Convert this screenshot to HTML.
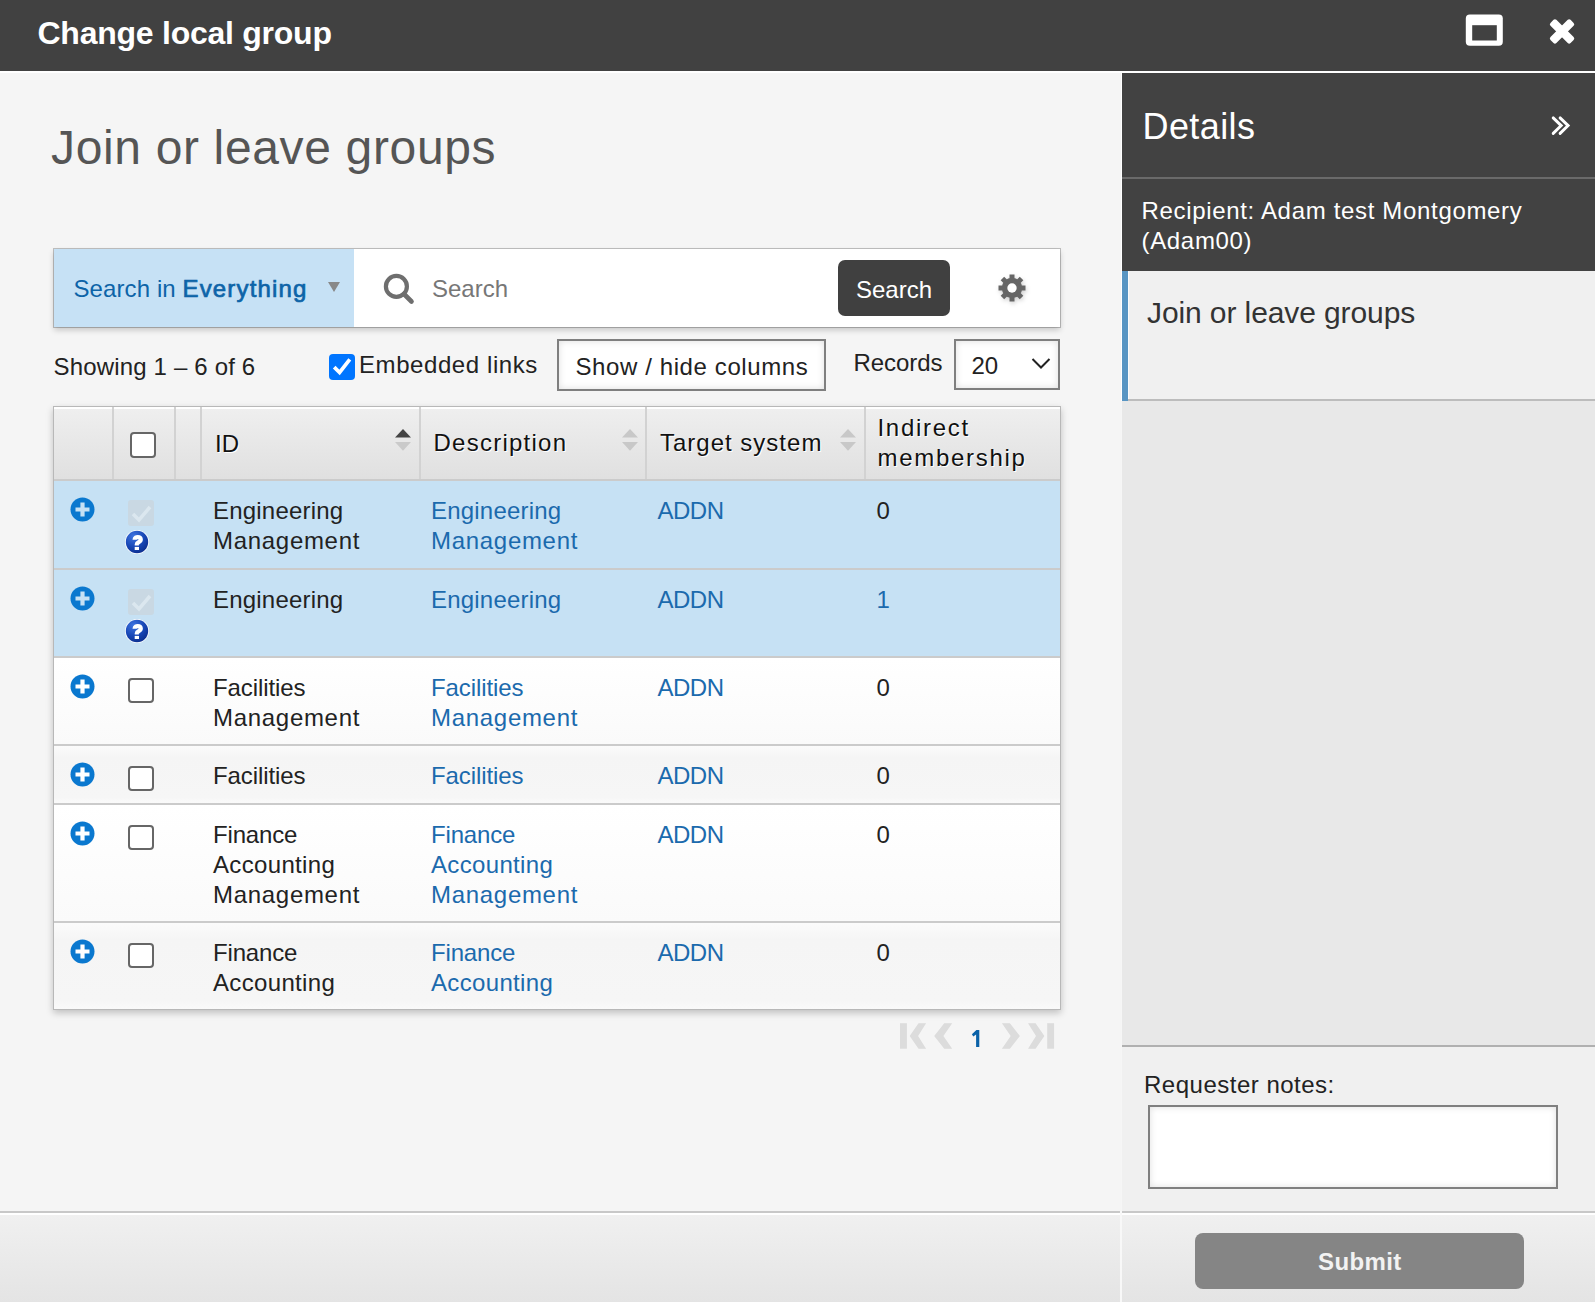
<!DOCTYPE html>
<html><head><meta charset="utf-8"><title>Change local group</title>
<style>
html,body{margin:0;padding:0;}
body{width:1595px;height:1302px;overflow:hidden;position:relative;background:#f5f5f5;font-family:"Liberation Sans",sans-serif;}
.r{position:absolute;}
.t{position:absolute;white-space:nowrap;}
svg{display:block;}
</style></head><body>
<div class="r" style="left:0px;top:0px;width:1595px;height:71px;background:#414141;"></div>
<div class="t " style="left:37.5px;top:13.11px;font-size:32px;line-height:40px;color:#fff;font-weight:700;letter-spacing:-0.25px;">Change local group</div>
<svg class="r" style="left:1465px;top:14px" width="39" height="34" viewBox="0 0 39 34"><rect x="0.8" y="0.5" width="37" height="31.3" rx="4" fill="#fff"/><rect x="7.2" y="11.2" width="24.6" height="15.3" fill="#414141"/></svg>
<svg class="r" style="left:1542px;top:11px" width="40" height="40" viewBox="0 0 40 40"><g transform="translate(20.05,20.4) rotate(45)" fill="#fff"><rect x="-14.2" y="-4.15" width="28.4" height="8.3" rx="2"/><rect x="-4.15" y="-14.2" width="8.3" height="28.4" rx="2"/></g></svg>
<div class="r" style="left:0px;top:71px;width:1595px;height:2px;background:#fff;"></div>
<div class="r" style="left:0px;top:73px;width:1121px;height:1138px;background:#f5f5f5;"></div>
<div class="r" style="left:1121px;top:71px;width:1px;height:330px;background:#fff;"></div>
<div class="r" style="left:1121px;top:401px;width:1px;height:810px;background:#f6f6f6;"></div>
<div class="r" style="left:1120px;top:1211px;width:2px;height:91px;background:#f8f8f8;"></div>
<div class="t " style="left:51px;top:118.17px;font-size:48px;line-height:60px;color:#555;letter-spacing:0.65px;">Join or leave groups</div>
<div class="r" style="left:54px;top:249px;width:1006px;height:78px;background:#fff;box-shadow:0 0 0 1px rgba(0,0,0,.22),0 3px 6px rgba(0,0,0,.2);"></div>
<div class="r" style="left:54px;top:249px;width:300px;height:78px;background:#c6e1f5;"></div>
<div class="t " style="left:73.5px;top:273.88px;font-size:24px;line-height:30px;color:#0d64a8;letter-spacing:0.1px;">Search in <span style="-webkit-text-stroke:0.7px #0d64a8;letter-spacing:1.15px">Everything</span></div>
<svg class="r" style="left:327px;top:281px" width="14" height="12" viewBox="0 0 14 12"><path d="M1 1 H13 L7 11 Z" fill="#888"/></svg>
<svg class="r" style="left:380px;top:270px" width="36" height="36" viewBox="0 0 36 36"><circle cx="16.4" cy="16.4" r="10.5" fill="none" stroke="#6e6e6e" stroke-width="4.2"/><path d="M24 24 L31.5 31.5" stroke="#6e6e6e" stroke-width="4.6" stroke-linecap="round"/></svg>
<div class="t " style="left:432px;top:273.68px;font-size:24px;line-height:30px;color:#777;">Search</div>
<div class="r" style="left:838px;top:260px;width:112px;height:56px;background:#404040;border-radius:7px;"></div>
<div class="t " style="left:856px;top:274.68px;font-size:24px;line-height:30px;color:#fff;">Search</div>
<svg class="r" style="left:995.6px;top:271.5px;filter:drop-shadow(1px 2px 2px rgba(0,0,0,.18))" width="32" height="32" viewBox="0 0 32 32"><g transform="translate(16,16)" fill="#666"><circle r="10.2"/><rect x="-2.5" y="-13.5" width="5" height="6" transform="rotate(0)"/><rect x="-2.5" y="-13.5" width="5" height="6" transform="rotate(45)"/><rect x="-2.5" y="-13.5" width="5" height="6" transform="rotate(90)"/><rect x="-2.5" y="-13.5" width="5" height="6" transform="rotate(135)"/><rect x="-2.5" y="-13.5" width="5" height="6" transform="rotate(180)"/><rect x="-2.5" y="-13.5" width="5" height="6" transform="rotate(225)"/><rect x="-2.5" y="-13.5" width="5" height="6" transform="rotate(270)"/><rect x="-2.5" y="-13.5" width="5" height="6" transform="rotate(315)"/><circle r="4.7" fill="#fff"/></g></svg>
<div class="t " style="left:53.5px;top:351.58px;font-size:24px;line-height:30px;color:#222;letter-spacing:0.17px;">Showing 1 – 6 of 6</div>
<div class="r" style="left:329px;top:354px;width:26px;height:26px;background:#0075ff;border-radius:4px;"></div>
<svg class="r" style="left:329px;top:354px" width="26" height="26" viewBox="0 0 26 26"><path d="M5.2 13.1 L10.6 18.5 L20.8 5.4" fill="none" stroke="#fff" stroke-width="3.7"/></svg>
<div class="t " style="left:359px;top:350.28px;font-size:24px;line-height:30px;color:#222;letter-spacing:0.58px;">Embedded links</div>
<div class="r" style="left:557px;top:339px;width:269px;height:52px;background:#fff;border:2px solid #7f7f7f;box-sizing:border-box;box-shadow:inset 0 0 7px rgba(0,0,0,.13);"></div>
<div class="t " style="left:575.5px;top:351.68px;font-size:24px;line-height:30px;color:#222;letter-spacing:0.6px;">Show / hide columns</div>
<div class="t " style="left:853.5px;top:347.78px;font-size:24px;line-height:30px;color:#222;letter-spacing:-0.05px;">Records</div>
<div class="r" style="left:954px;top:339px;width:106px;height:51px;background:#fff;border:2px solid #7f7f7f;box-sizing:border-box;box-shadow:inset 0 0 7px rgba(0,0,0,.13);"></div>
<div class="t " style="left:971.5px;top:351.38px;font-size:24px;line-height:30px;color:#222;">20</div>
<svg class="r" style="left:1030px;top:356px" width="22" height="16" viewBox="0 0 22 16"><path d="M2.5 3 L11 11.5 L19.5 3" fill="none" stroke="#222" stroke-width="2"/></svg>
<div class="r" style="left:53px;top:406px;width:1008px;height:604px;background:#fff;border:1px solid #b8b8b8;box-sizing:border-box;box-shadow:0 3px 7px rgba(0,0,0,.22);"></div>
<div class="r" style="left:54px;top:407px;width:1006px;height:72px;background:linear-gradient(#efefef,#e0e0e0);"></div>
<div class="r" style="left:54px;top:407px;width:1006px;height:2px;background:#fff;"></div>
<div class="r" style="left:54px;top:479px;width:1006px;height:2px;background:#cbcbcb;"></div>
<div class="r" style="left:112px;top:407px;width:2px;height:72px;background:#d2d2d2;"></div>
<div class="r" style="left:174px;top:407px;width:2px;height:72px;background:#d2d2d2;"></div>
<div class="r" style="left:200px;top:407px;width:2px;height:72px;background:#d2d2d2;"></div>
<div class="r" style="left:419px;top:407px;width:2px;height:72px;background:#d2d2d2;"></div>
<div class="r" style="left:645px;top:407px;width:2px;height:72px;background:#d2d2d2;"></div>
<div class="r" style="left:864px;top:407px;width:2px;height:72px;background:#d2d2d2;"></div>
<div class="r" style="left:130px;top:432px;width:26px;height:26px;background:#fff;border:2px solid #666;border-radius:4px;box-sizing:border-box;"></div>
<div class="t " style="left:215px;top:429.38px;font-size:24px;line-height:30px;color:#111;text-shadow:1px 1px 0 #fff;">ID</div>
<div class="t " style="left:433.5px;top:428.38px;font-size:24px;line-height:30px;color:#111;letter-spacing:1.25px;text-shadow:1px 1px 0 #fff;">Description</div>
<div class="t " style="left:660px;top:428.08px;font-size:24px;line-height:30px;color:#111;letter-spacing:1.0px;text-shadow:1px 1px 0 #fff;">Target system</div>
<div class="t " style="left:877.5px;top:413.18px;font-size:24px;line-height:30px;color:#111;letter-spacing:1.7px;text-shadow:1px 1px 0 #fff;">Indirect<br>membership</div>
<svg class="r" style="left:394px;top:428px" width="18" height="24" viewBox="0 0 18 24"><path d="M1 9.5 L9 1 L17 9.5 Z" fill="#444"/><path d="M1 14 L9 22.7 L17 14 Z" fill="#cacaca"/></svg>
<svg class="r" style="left:621px;top:428px" width="18" height="24" viewBox="0 0 18 24"><path d="M1 9.5 L9 1 L17 9.5 Z" fill="#c8c8c8"/><path d="M1 14 L9 22.7 L17 14 Z" fill="#c8c8c8"/></svg>
<svg class="r" style="left:839px;top:428px" width="18" height="24" viewBox="0 0 18 24"><path d="M1 9.5 L9 1 L17 9.5 Z" fill="#c8c8c8"/><path d="M1 14 L9 22.7 L17 14 Z" fill="#c8c8c8"/></svg>
<div class="r" style="left:54px;top:481px;width:1006px;height:87px;background:#c6e1f4;"></div>
<div class="r" style="left:54px;top:568px;width:1006px;height:2px;background:#cbcbcb;"></div>
<svg class="r" style="left:70.4px;top:496.5px" width="25" height="25" viewBox="0 0 25 25"><circle cx="12.5" cy="12.5" r="12" fill="#0a78cf"/><path d="M12.5 5.5 V19.5 M5.5 12.5 H19.5" stroke="#c6e1f4" stroke-width="4.2"/></svg>
<div class="r" style="left:128px;top:500px;width:26px;height:26px;background:#c9d8e3;border-radius:3px;"></div>
<svg class="r" style="left:128px;top:500px" width="26" height="26" viewBox="0 0 26 26"><path d="M5 14 L11 20 L22 7" fill="none" stroke="#dbe7ef" stroke-width="3.5"/></svg>
<svg class="r" style="left:124px;top:529px" width="26" height="26" viewBox="0 0 26 26"><defs><radialGradient id="qg481" cx="0.35" cy="0.25" r="0.8"><stop offset="0" stop-color="#3f74e0"/><stop offset="0.6" stop-color="#1746b5"/><stop offset="1" stop-color="#0d2f8f"/></radialGradient></defs><circle cx="13" cy="13" r="12" fill="#fff"/><circle cx="13" cy="13" r="11.2" fill="url(#qg481)"/><path d="M10.6 10.8 C10.6 8.6 12.6 8.1 13.6 8.1 C15.8 8.1 16.8 9.4 16.8 11.0 C16.8 13.0 12.8 13.3 12.8 15.3 V16.5" fill="none" stroke="#fff" stroke-width="4.2"/><rect x="10.7" y="17.9" width="4.3" height="3.1" fill="#fff"/></svg>
<div class="t " style="left:213px;top:495.98px;font-size:24px;line-height:30px;color:#222;"><span style="letter-spacing:0.2px">Engineering</span><br><span style="letter-spacing:0.7px">Management</span></div>
<div class="t " style="left:431px;top:495.98px;font-size:24px;line-height:30px;color:#1b6aad;"><span style="letter-spacing:0.2px">Engineering</span><br><span style="letter-spacing:0.7px">Management</span></div>
<div class="t " style="left:657.5px;top:495.98px;font-size:24px;line-height:30px;color:#1b6aad;letter-spacing:-0.5px;">ADDN</div>
<div class="t " style="left:876.5px;top:495.98px;font-size:24px;line-height:30px;color:#222;">0</div>
<div class="r" style="left:54px;top:570px;width:1006px;height:86px;background:#c6e1f4;"></div>
<div class="r" style="left:54px;top:656px;width:1006px;height:2px;background:#cbcbcb;"></div>
<svg class="r" style="left:70.4px;top:585.5px" width="25" height="25" viewBox="0 0 25 25"><circle cx="12.5" cy="12.5" r="12" fill="#0a78cf"/><path d="M12.5 5.5 V19.5 M5.5 12.5 H19.5" stroke="#c6e1f4" stroke-width="4.2"/></svg>
<div class="r" style="left:128px;top:589px;width:26px;height:26px;background:#c9d8e3;border-radius:3px;"></div>
<svg class="r" style="left:128px;top:589px" width="26" height="26" viewBox="0 0 26 26"><path d="M5 14 L11 20 L22 7" fill="none" stroke="#dbe7ef" stroke-width="3.5"/></svg>
<svg class="r" style="left:124px;top:618px" width="26" height="26" viewBox="0 0 26 26"><defs><radialGradient id="qg570" cx="0.35" cy="0.25" r="0.8"><stop offset="0" stop-color="#3f74e0"/><stop offset="0.6" stop-color="#1746b5"/><stop offset="1" stop-color="#0d2f8f"/></radialGradient></defs><circle cx="13" cy="13" r="12" fill="#fff"/><circle cx="13" cy="13" r="11.2" fill="url(#qg570)"/><path d="M10.6 10.8 C10.6 8.6 12.6 8.1 13.6 8.1 C15.8 8.1 16.8 9.4 16.8 11.0 C16.8 13.0 12.8 13.3 12.8 15.3 V16.5" fill="none" stroke="#fff" stroke-width="4.2"/><rect x="10.7" y="17.9" width="4.3" height="3.1" fill="#fff"/></svg>
<div class="t " style="left:213px;top:584.98px;font-size:24px;line-height:30px;color:#222;"><span style="letter-spacing:0.2px">Engineering</span></div>
<div class="t " style="left:431px;top:584.98px;font-size:24px;line-height:30px;color:#1b6aad;"><span style="letter-spacing:0.2px">Engineering</span></div>
<div class="t " style="left:657.5px;top:584.98px;font-size:24px;line-height:30px;color:#1b6aad;letter-spacing:-0.5px;">ADDN</div>
<div class="t " style="left:876.5px;top:584.98px;font-size:24px;line-height:30px;color:#1b6aad;">1</div>
<div class="r" style="left:54px;top:658px;width:1006px;height:86px;background:linear-gradient(#fff,#fafafa);"></div>
<div class="r" style="left:54px;top:744px;width:1006px;height:2px;background:#cbcbcb;"></div>
<svg class="r" style="left:70.4px;top:673.5px" width="25" height="25" viewBox="0 0 25 25"><circle cx="12.5" cy="12.5" r="12" fill="#0a78cf"/><path d="M12.5 5.5 V19.5 M5.5 12.5 H19.5" stroke="#fff" stroke-width="4.2"/></svg>
<div class="r" style="left:128px;top:678px;width:26px;height:25px;background:#fff;border:2px solid #666;border-radius:4px;box-sizing:border-box;"></div>
<div class="t " style="left:213px;top:672.98px;font-size:24px;line-height:30px;color:#222;"><span style="letter-spacing:-0.1px">Facilities</span><br><span style="letter-spacing:0.7px">Management</span></div>
<div class="t " style="left:431px;top:672.98px;font-size:24px;line-height:30px;color:#1b6aad;"><span style="letter-spacing:-0.1px">Facilities</span><br><span style="letter-spacing:0.7px">Management</span></div>
<div class="t " style="left:657.5px;top:672.98px;font-size:24px;line-height:30px;color:#1b6aad;letter-spacing:-0.5px;">ADDN</div>
<div class="t " style="left:876.5px;top:672.98px;font-size:24px;line-height:30px;color:#222;">0</div>
<div class="r" style="left:54px;top:746px;width:1006px;height:57px;background:linear-gradient(#fbfbfb,#f5f5f5 20%,#f6f6f6 90%,#fafafa);"></div>
<div class="r" style="left:54px;top:803px;width:1006px;height:2px;background:#cbcbcb;"></div>
<svg class="r" style="left:70.4px;top:761.5px" width="25" height="25" viewBox="0 0 25 25"><circle cx="12.5" cy="12.5" r="12" fill="#0a78cf"/><path d="M12.5 5.5 V19.5 M5.5 12.5 H19.5" stroke="#fff" stroke-width="4.2"/></svg>
<div class="r" style="left:128px;top:766px;width:26px;height:25px;background:#fff;border:2px solid #666;border-radius:4px;box-sizing:border-box;"></div>
<div class="t " style="left:213px;top:760.98px;font-size:24px;line-height:30px;color:#222;"><span style="letter-spacing:-0.1px">Facilities</span></div>
<div class="t " style="left:431px;top:760.98px;font-size:24px;line-height:30px;color:#1b6aad;"><span style="letter-spacing:-0.1px">Facilities</span></div>
<div class="t " style="left:657.5px;top:760.98px;font-size:24px;line-height:30px;color:#1b6aad;letter-spacing:-0.5px;">ADDN</div>
<div class="t " style="left:876.5px;top:760.98px;font-size:24px;line-height:30px;color:#222;">0</div>
<div class="r" style="left:54px;top:805px;width:1006px;height:116px;background:linear-gradient(#fff,#fafafa);"></div>
<div class="r" style="left:54px;top:921px;width:1006px;height:2px;background:#cbcbcb;"></div>
<svg class="r" style="left:70.4px;top:820.5px" width="25" height="25" viewBox="0 0 25 25"><circle cx="12.5" cy="12.5" r="12" fill="#0a78cf"/><path d="M12.5 5.5 V19.5 M5.5 12.5 H19.5" stroke="#fff" stroke-width="4.2"/></svg>
<div class="r" style="left:128px;top:825px;width:26px;height:25px;background:#fff;border:2px solid #666;border-radius:4px;box-sizing:border-box;"></div>
<div class="t " style="left:213px;top:819.98px;font-size:24px;line-height:30px;color:#222;"><span style="letter-spacing:-0.18px">Finance</span><br><span style="letter-spacing:0.34px">Accounting</span><br><span style="letter-spacing:0.7px">Management</span></div>
<div class="t " style="left:431px;top:819.98px;font-size:24px;line-height:30px;color:#1b6aad;"><span style="letter-spacing:-0.18px">Finance</span><br><span style="letter-spacing:0.34px">Accounting</span><br><span style="letter-spacing:0.7px">Management</span></div>
<div class="t " style="left:657.5px;top:819.98px;font-size:24px;line-height:30px;color:#1b6aad;letter-spacing:-0.5px;">ADDN</div>
<div class="t " style="left:876.5px;top:819.98px;font-size:24px;line-height:30px;color:#222;">0</div>
<div class="r" style="left:54px;top:923px;width:1006px;height:86px;background:linear-gradient(#fbfbfb,#f5f5f5 20%,#f6f6f6 90%,#fafafa);"></div>
<svg class="r" style="left:70.4px;top:938.5px" width="25" height="25" viewBox="0 0 25 25"><circle cx="12.5" cy="12.5" r="12" fill="#0a78cf"/><path d="M12.5 5.5 V19.5 M5.5 12.5 H19.5" stroke="#fff" stroke-width="4.2"/></svg>
<div class="r" style="left:128px;top:943px;width:26px;height:25px;background:#fff;border:2px solid #666;border-radius:4px;box-sizing:border-box;"></div>
<div class="t " style="left:213px;top:937.98px;font-size:24px;line-height:30px;color:#222;"><span style="letter-spacing:-0.18px">Finance</span><br><span style="letter-spacing:0.34px">Accounting</span></div>
<div class="t " style="left:431px;top:937.98px;font-size:24px;line-height:30px;color:#1b6aad;"><span style="letter-spacing:-0.18px">Finance</span><br><span style="letter-spacing:0.34px">Accounting</span></div>
<div class="t " style="left:657.5px;top:937.98px;font-size:24px;line-height:30px;color:#1b6aad;letter-spacing:-0.5px;">ADDN</div>
<div class="t " style="left:876.5px;top:937.98px;font-size:24px;line-height:30px;color:#222;">0</div>
<svg class="r" style="left:890px;top:1015px" width="175" height="45" viewBox="0 0 175 45"><defs><filter id="pb" x="-10%" y="-10%" width="120%" height="120%"><feGaussianBlur stdDeviation="0.55"/></filter></defs><g fill="#dcdcdc" filter="url(#pb)"><polygon points="10.00,8.20 16.90,8.20 16.90,33.70 10.00,33.70"/><polygon points="28.50,8.20 36.10,8.20 28.10,21.00 36.10,33.70 28.50,33.70 19.70,21.00"/><polygon points="54.20,8.20 62.20,8.20 53.40,21.00 62.20,33.70 54.20,33.70 44.20,21.00"/><polygon points="164.10,8.20 157.20,8.20 157.20,33.70 164.10,33.70"/><polygon points="145.60,8.20 138.00,8.20 146.00,21.00 138.00,33.70 145.60,33.70 154.40,21.00"/><polygon points="119.90,8.20 111.90,8.20 120.70,21.00 111.90,33.70 119.90,33.70 129.90,21.00"/></g></svg>
<svg class="r" style="left:960px;top:1020px" width="30" height="35" viewBox="960 1020 30 35"><polygon points="976.4,1030 979.3,1030 979.3,1047 976.1,1047 976.1,1034.4 973.3,1036.4 971.9,1034.3" fill="#0a62a8"/></svg>
<div class="r" style="left:0px;top:1211px;width:1120px;height:2px;background:#c8c8c8;"></div>
<div class="r" style="left:0px;top:1213px;width:1120px;height:2px;background:#fff;"></div>
<div class="r" style="left:0px;top:1215px;width:1120px;height:87px;background:linear-gradient(#f0f0f0,#e4e4e4);"></div>
<div class="r" style="left:1122px;top:73px;width:473px;height:104px;background:#424242;"></div>
<div class="t " style="left:1142.5px;top:104.43px;font-size:36px;line-height:45px;color:#fff;letter-spacing:0.4px;">Details</div>
<svg class="r" style="left:1549px;top:114px" width="24" height="24" viewBox="0 0 24 24"><path d="M4.2 3.9 L12.2 11.6 L4.2 19.4 M11.1 3.9 L19.1 11.6 L11.1 19.4" fill="none" stroke="#fff" stroke-width="2.9" stroke-linecap="round"/></svg>
<div class="r" style="left:1122px;top:177px;width:473px;height:2px;background:#6a6a6a;"></div>
<div class="r" style="left:1122px;top:179px;width:473px;height:92px;background:#424242;"></div>
<div class="t " style="left:1141.5px;top:195.88px;font-size:24px;line-height:30px;color:#fff;letter-spacing:0.67px;">Recipient: Adam test Montgomery<br>(Adam00)</div>
<div class="r" style="left:1122px;top:271px;width:473px;height:128px;background:#f0f0f0;"></div>
<div class="r" style="left:1122px;top:271px;width:6px;height:130px;background:#5895c3;"></div>
<div class="r" style="left:1128px;top:271px;width:1px;height:128px;background:#fbfbfb;"></div>
<div class="t " style="left:1147px;top:294.41px;font-size:30px;line-height:38px;color:#333;letter-spacing:-0.1px;">Join or leave groups</div>
<div class="r" style="left:1128px;top:399px;width:467px;height:2px;background:#bcbcbc;"></div>
<div class="r" style="left:1122px;top:401px;width:473px;height:644px;background:#e8e8e8;"></div>
<div class="r" style="left:1122px;top:1045px;width:473px;height:2px;background:#b0b0b0;"></div>
<div class="r" style="left:1122px;top:1047px;width:473px;height:164px;background:#f0f0f0;"></div>
<div class="t " style="left:1144px;top:1069.68px;font-size:24px;line-height:30px;color:#222;letter-spacing:0.5px;">Requester notes:</div>
<div class="r" style="left:1148px;top:1105px;width:410px;height:84px;background:#fff;border:2px solid #7f7f7f;box-sizing:border-box;box-shadow:inset 0 0 7px rgba(0,0,0,.13);"></div>
<div class="r" style="left:1122px;top:1211px;width:473px;height:2px;background:#c8c8c8;"></div>
<div class="r" style="left:1122px;top:1213px;width:473px;height:2px;background:#fff;"></div>
<div class="r" style="left:1122px;top:1215px;width:473px;height:87px;background:linear-gradient(#f0f0f0,#e4e4e4);"></div>
<div class="r" style="left:1195px;top:1233px;width:329px;height:56px;background:#858585;border-radius:8px;"></div>
<div class="t " style="left:1318px;top:1247.48px;font-size:24px;line-height:30px;color:#f2f2f2;font-weight:700;letter-spacing:0.4px;">Submit</div>
</body></html>
